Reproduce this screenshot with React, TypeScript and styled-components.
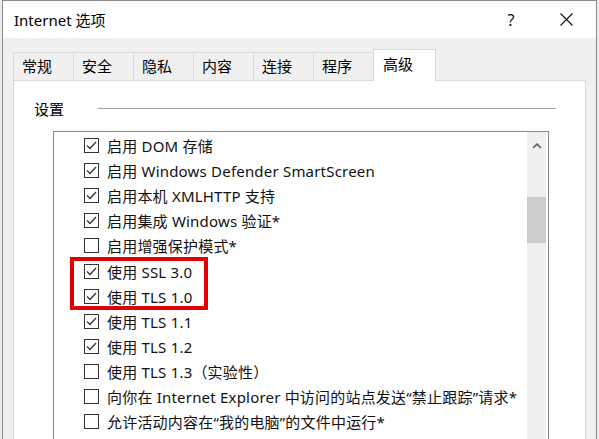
import React from "react"
import styled, { createGlobalStyle } from "styled-components"

const GlobalStyle = createGlobalStyle`
    html, body {
        margin: 0;
        padding: 0;
        overflow: hidden;
        background: #ececec;
    }
    body {
        font-family: "Noto Sans", "Noto Sans CJK SC", sans-serif;
        color: #000;
    }
`

const Janela = styled.div`
    margin-left: 2px;
    width: 593px;
    height: 439px;
    border: 1px solid #8c8c8c;
    border-bottom: none;
    background: #f0f0f0;
    display: flex;
    flex-direction: column;
    overflow: hidden;
`

const BarraTitulo = styled.div`
    height: 37px;
    background: #fff;
    display: flex;
    align-items: center;
    padding-left: 11px;
    font-size: 15px;
`

const Titulo = styled.span`
    flex: 1;
`

const BotaoTitulo = styled.div<{ $largura: number }>`
    width: ${(p) => p.$largura}px;
    height: 37px;
    display: flex;
    align-items: center;
    justify-content: center;
    font-size: 16px;
    color: #111;
`

const Corpo = styled.div`
    flex: 1;
    display: flex;
    flex-direction: column;
    padding: 11px 10px 0 10px;
`

const Abas = styled.div`
    display: flex;
    align-items: flex-end;
    height: 31px;
`

const Aba = styled.div<{ $ativa?: boolean }>`
    position: relative;
    box-sizing: border-box;
    width: ${(p) => (p.$ativa ? 63 : 60)}px;
    height: ${(p) => (p.$ativa ? 32 : 28)}px;
    margin-bottom: ${(p) => (p.$ativa ? -1 : 0)}px;
    z-index: ${(p) => (p.$ativa ? 1 : 0)};
    padding: ${(p) => (p.$ativa ? "3px 0 0 9px" : "2px 0 0 8px")};
    border: 1px solid #d9d9d9;
    border-bottom: none;
    border-right: ${(p) => (p.$ativa ? "1px solid #d9d9d9" : "none")};
    background: ${(p) => (p.$ativa ? "#fff" : "#f0f0f0")};
    font-size: 15px;
    line-height: 22px;
`

const Painel = styled.div`
    flex: 1;
    background: #fff;
    border: 1px solid #d9d9d9;
    border-bottom: none;
    padding-top: 17px;
`

const Grupo = styled.div`
    display: flex;
    align-items: center;
    height: 20px;
    padding: 0 29px 0 20px;
    font-size: 15px;
`

const Linha = styled.div`
    flex: 1;
    height: 1px;
    margin-left: 34px;
    background: #a0a0a0;
`

const Lista = styled.div`
    position: relative;
    display: flex;
    height: 330px;
    margin: 13px 36px 0 39px;
    border: 1px solid #828790;
    border-bottom: none;
`

const Itens = styled.div`
    flex: 1;
    padding: 1px 0 0 30px;
`

const Item = styled.div`
    display: flex;
    align-items: center;
    height: 25.1px;
    font-size: 15px;
    letter-spacing: 0.2px;
    color: #111;
    white-space: nowrap;
`

const Caixa = styled.div`
    box-sizing: border-box;
    width: 15px;
    height: 15px;
    border: 1px solid #333;
    margin-right: 8px;
    flex-shrink: 0;
    display: flex;
    align-items: center;
    justify-content: center;
`

const Rolagem = styled.div`
    width: 19px;
    margin-right: 2px;
    background: #f0f0f0;
    display: flex;
    flex-direction: column;
    align-items: stretch;
`

const SetaCima = styled.div`
    height: 28px;
    display: flex;
    align-items: center;
    justify-content: center;
`

const Polegar = styled.div`
    margin-top: 37px;
    height: 46px;
    background: #cdcdcd;
`

const Destaque = styled.div`
    position: absolute;
    left: 16px;
    top: 125px;
    width: 138px;
    height: 53px;
    box-sizing: border-box;
    border: 4px solid #e30000;
    pointer-events: none;
`

const itens: { texto: string; marcado: boolean }[] = [
    { texto: "启用 DOM 存储", marcado: true },
    { texto: "启用 Windows Defender SmartScreen", marcado: true },
    { texto: "启用本机 XMLHTTP 支持", marcado: true },
    { texto: "启用集成 Windows 验证*", marcado: true },
    { texto: "启用增强保护模式*", marcado: false },
    { texto: "使用 SSL 3.0", marcado: true },
    { texto: "使用 TLS 1.0", marcado: true },
    { texto: "使用 TLS 1.1", marcado: true },
    { texto: "使用 TLS 1.2", marcado: true },
    { texto: "使用 TLS 1.3（实验性）", marcado: false },
    { texto: "向你在 Internet Explorer 中访问的站点发送“禁止跟踪”请求*", marcado: false },
    { texto: "允许活动内容在“我的电脑”的文件中运行*", marcado: false },
    { texto: "", marcado: false },
]

const abas = ["常规", "安全", "隐私", "内容", "连接", "程序", "高级"]

function Marca() {
    return (
        <svg width="11" height="9" viewBox="0 0 11 9">
            <polyline points="1,4.5 4,7.5 10,1" fill="none" stroke="#333" strokeWidth="1.3" />
        </svg>
    )
}

export default function App() {
    return (
        <>
            <GlobalStyle />
            <Janela>
                <BarraTitulo>
                    <Titulo>Internet 选项</Titulo>
                    <BotaoTitulo $largura={50}>?</BotaoTitulo>
                    <BotaoTitulo $largura={60}>
                        <svg width="13" height="13" viewBox="0 0 13 13">
                            <path d="M0.5 0.5 L12.5 12.5 M12.5 0.5 L0.5 12.5" stroke="#111" strokeWidth="1.1" />
                        </svg>
                    </BotaoTitulo>
                </BarraTitulo>
                <Corpo>
                    <Abas>
                        {abas.map((a) => (
                            <Aba key={a} $ativa={a === "高级"}>{a}</Aba>
                        ))}
                    </Abas>
                    <Painel>
                        <Grupo>
                            设置
                            <Linha />
                        </Grupo>
                        <Lista>
                            <Itens>
                                {itens.map((i, n) => (
                                    <Item key={n}>
                                        <Caixa>{i.marcado && <Marca />}</Caixa>
                                        {i.texto}
                                    </Item>
                                ))}
                            </Itens>
                            <Rolagem>
                                <SetaCima>
                                    <svg width="10" height="6" viewBox="0 0 10 6">
                                        <path d="M1 5 L5 1.2 L9 5" fill="none" stroke="#606060" strokeWidth="1.7" />
                                    </svg>
                                </SetaCima>
                                <Polegar />
                            </Rolagem>
                            <Destaque />
                        </Lista>
                    </Painel>
                </Corpo>
            </Janela>
        </>
    )
}
